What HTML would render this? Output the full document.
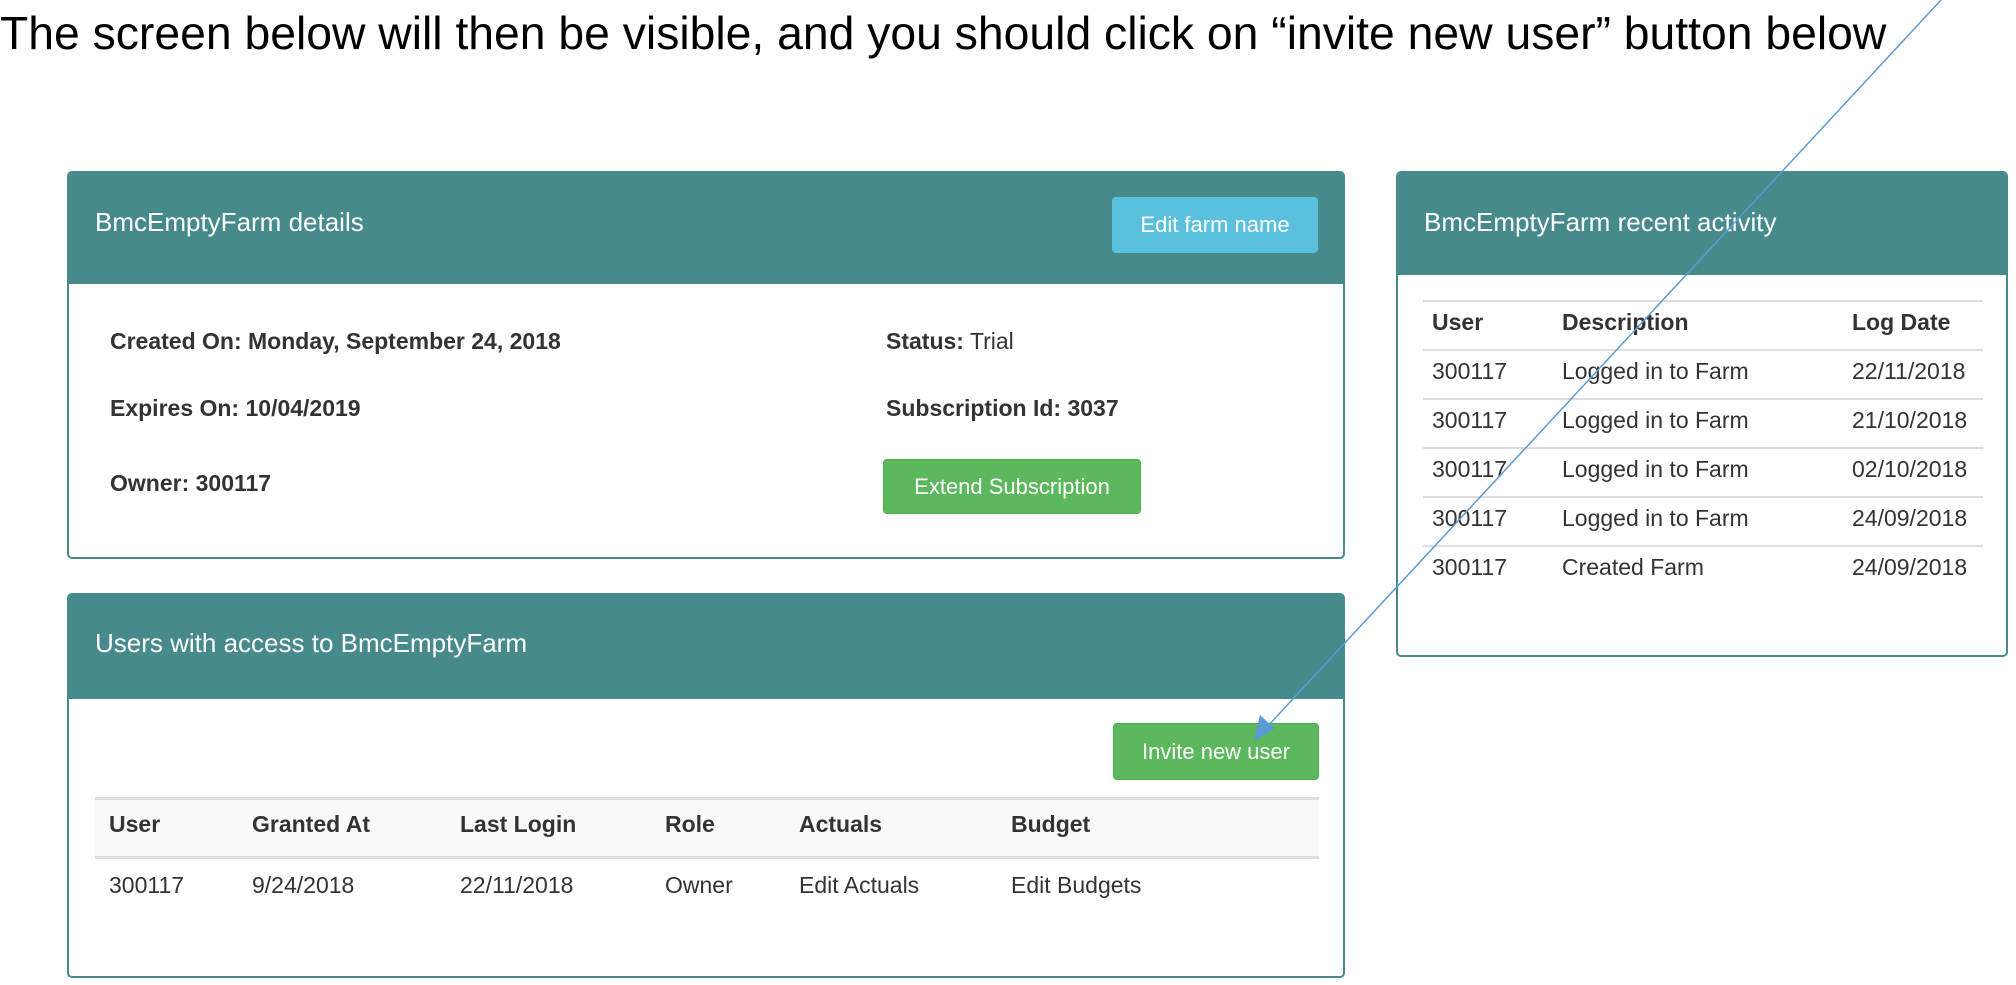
<!DOCTYPE html>
<html><head><meta charset="utf-8"><style>
*{margin:0;padding:0;box-sizing:border-box}
body{width:2016px;height:985px;background:#fff;position:relative;overflow:hidden;font-family:"Liberation Sans",Arial,sans-serif;color:#333}
.a{position:absolute;white-space:nowrap}
.panel{position:absolute;border:2px solid #468a8c;border-radius:5px;background:#fff;overflow:hidden}
.hdr{position:absolute;left:0;right:0;top:0;background:#468a8c}
.ht{position:absolute;color:#fff;font-size:26px}
.btn{position:absolute;border-radius:4px;color:#fff;font-size:22px;display:flex;align-items:center;justify-content:center}
.t{font-size:23px}
b{font-weight:bold}
.line{position:absolute;height:2px;background:#ddd}
</style></head><body>
<div class="a" style="left:0;top:6px;font-size:46.3px;color:#000">The screen below will then be visible, and you should click on “invite new user” button below</div>

<div class="panel" style="left:67px;top:171px;width:1278px;height:388px">
 <div class="hdr" style="height:111px"></div>
 <div class="ht" style="left:26px;top:34px">BmcEmptyFarm details</div>
 <div class="btn" style="left:1043px;top:24px;width:206px;height:56px;background:#5bc0de">Edit farm name</div>
 <div class="a t" style="left:41px;top:155px"><b>Created On: Monday, September 24, 2018</b></div>
 <div class="a t" style="left:41px;top:222px"><b>Expires On: 10/04/2019</b></div>
 <div class="a t" style="left:41px;top:297px"><b>Owner: 300117</b></div>
 <div class="a t" style="left:817px;top:155px"><b>Status:</b> Trial</div>
 <div class="a t" style="left:817px;top:222px"><b>Subscription Id: 3037</b></div>
 <div class="btn" style="left:814px;top:286px;width:258px;height:55px;background:#5cb85c;border:1px solid #4cae4c">Extend Subscription</div>
</div>

<div class="panel" style="left:67px;top:593px;width:1278px;height:385px">
 <div class="hdr" style="height:104px"></div>
 <div class="ht" style="left:26px;top:33px">Users with access to BmcEmptyFarm</div>
 <div class="btn" style="left:1044px;top:128px;width:206px;height:57px;background:#5cb85c;border:1px solid #4cae4c">Invite new user</div>
 <div style="position:absolute;left:26px;top:202px;width:1224px;height:62px;background:#f9f9f9;border-top:3px solid #ddd;border-bottom:3px solid #ddd"></div>
 <div class="a t" style="left:40px;top:216px"><b>User</b></div>
 <div class="a t" style="left:183px;top:216px"><b>Granted At</b></div>
 <div class="a t" style="left:391px;top:216px"><b>Last Login</b></div>
 <div class="a t" style="left:596px;top:216px"><b>Role</b></div>
 <div class="a t" style="left:730px;top:216px"><b>Actuals</b></div>
 <div class="a t" style="left:942px;top:216px"><b>Budget</b></div>
 <div class="a t" style="left:40px;top:277px">300117</div>
 <div class="a t" style="left:183px;top:277px">9/24/2018</div>
 <div class="a t" style="left:391px;top:277px">22/11/2018</div>
 <div class="a t" style="left:596px;top:277px">Owner</div>
 <div class="a t" style="left:730px;top:277px">Edit Actuals</div>
 <div class="a t" style="left:942px;top:277px">Edit Budgets</div>
</div>

<div class="panel" style="left:1396px;top:171px;width:612px;height:486px">
 <div class="hdr" style="height:102px"></div>
 <div class="ht" style="left:26px;top:34px">BmcEmptyFarm recent activity</div>
 <div class="line" style="left:25px;width:560px;top:127px"></div>
 <div class="line" style="left:25px;width:560px;top:176px"></div>
 <div class="line" style="left:25px;width:560px;top:225px"></div>
 <div class="line" style="left:25px;width:560px;top:274px"></div>
 <div class="line" style="left:25px;width:560px;top:323px"></div>
 <div class="line" style="left:25px;width:560px;top:372px"></div>
 <div class="a t" style="left:34px;top:136px"><b>User</b></div>
 <div class="a t" style="left:164px;top:136px"><b>Description</b></div>
 <div class="a t" style="left:454px;top:136px"><b>Log Date</b></div>
 <div class="a t" style="left:34px;top:185px">300117</div><div class="a t" style="left:164px;top:185px">Logged in to Farm</div><div class="a t" style="left:454px;top:185px">22/11/2018</div>
 <div class="a t" style="left:34px;top:234px">300117</div><div class="a t" style="left:164px;top:234px">Logged in to Farm</div><div class="a t" style="left:454px;top:234px">21/10/2018</div>
 <div class="a t" style="left:34px;top:283px">300117</div><div class="a t" style="left:164px;top:283px">Logged in to Farm</div><div class="a t" style="left:454px;top:283px">02/10/2018</div>
 <div class="a t" style="left:34px;top:332px">300117</div><div class="a t" style="left:164px;top:332px">Logged in to Farm</div><div class="a t" style="left:454px;top:332px">24/09/2018</div>
 <div class="a t" style="left:34px;top:381px">300117</div><div class="a t" style="left:164px;top:381px">Created Farm</div><div class="a t" style="left:454px;top:381px">24/09/2018</div>
</div>

<svg style="position:absolute;left:0;top:0" width="2016" height="985">
 <line x1="1941" y1="0" x2="1266" y2="728" stroke="#5b9bd5" stroke-width="1.5"/>
 <polygon points="1254,741 1260,715 1275,729" fill="#5b9bd5"/>
</svg>
</body></html>
